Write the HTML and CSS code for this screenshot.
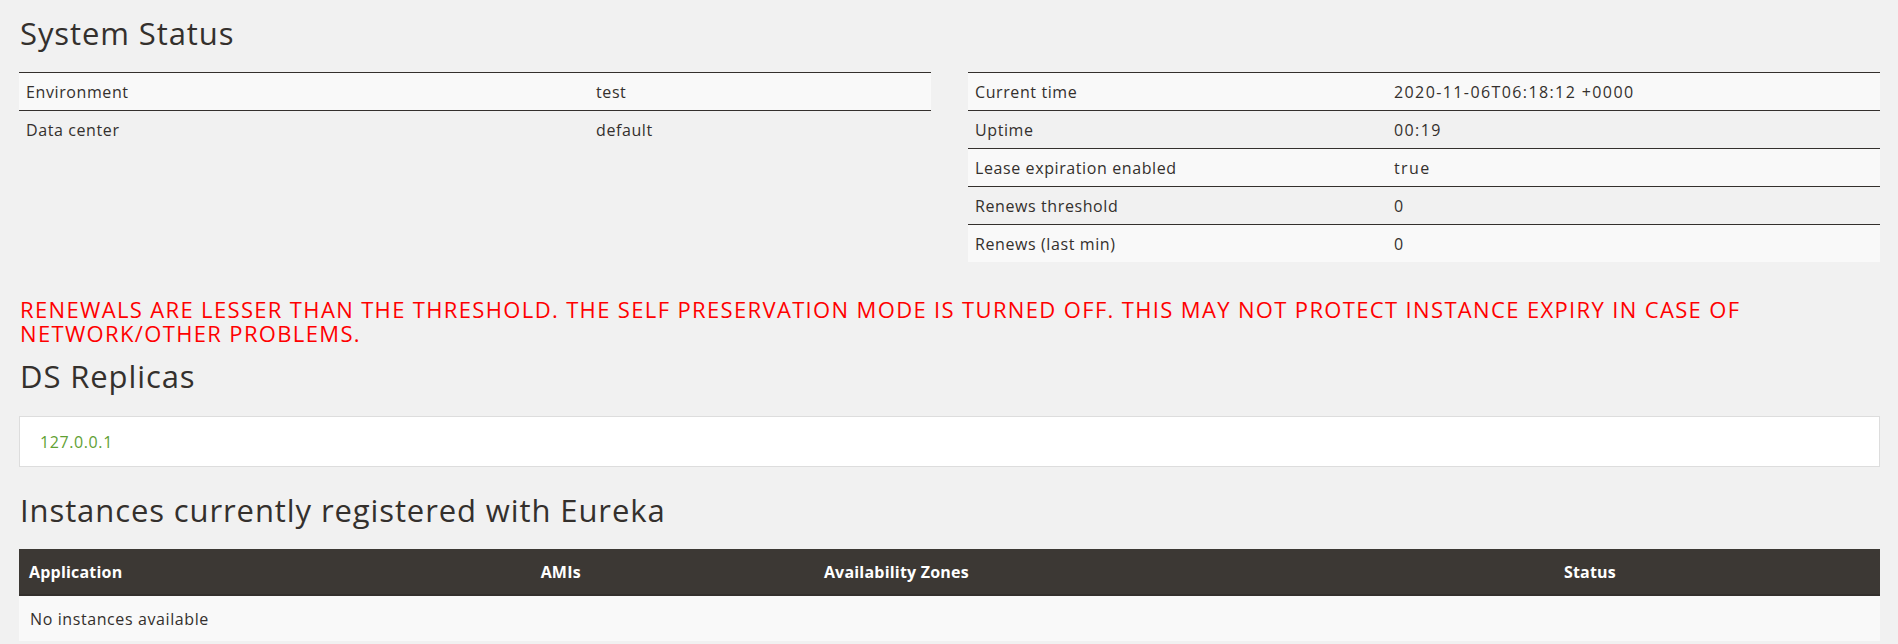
FILE: index.html
```html
<!DOCTYPE html>
<html lang="en">
<head>
  <meta charset="UTF-8" />
  <title>Eureka</title>
  <link rel="stylesheet" href="styles.css">
</head>
<body>
  <div class="page">
    <h1 class="heading">System Status</h1>

    <div class="status-grid">
      <table class="status-table status-env">
        <tbody>
          <tr><td>Environment</td><td>test</td></tr>
          <tr><td>Data center</td><td>default</td></tr>
        </tbody>
      </table>

      <table class="status-table status-info">
        <tbody>
          <tr><td>Current time</td><td>2020-11-06T06:18:12 +0000</td></tr>
          <tr><td>Uptime</td><td>00:19</td></tr>
          <tr><td>Lease expiration enabled</td><td>true</td></tr>
          <tr><td>Renews threshold</td><td>0</td></tr>
          <tr><td>Renews (last min)</td><td>0</td></tr>
        </tbody>
      </table>
    </div>

    <p class="warning">RENEWALS ARE LESSER THAN THE THRESHOLD. THE SELF PRESERVATION MODE IS TURNED OFF. THIS MAY NOT PROTECT INSTANCE EXPIRY IN CASE OF<br>NETWORK/OTHER PROBLEMS.</p>

    <h1 class="heading">DS Replicas</h1>
    <ul class="replicas">
      <li><a href="#">127.0.0.1</a></li>
    </ul>

    <h1 class="heading">Instances currently registered with Eureka</h1>
    <table class="instances">
      <thead>
        <tr>
          <th class="col-app">Application</th>
          <th class="col-ami">AMIs</th>
          <th class="col-zone">Availability Zones</th>
          <th class="col-status">Status</th>
        </tr>
      </thead>
      <tbody>
        <tr><td colspan="4">No instances available</td></tr>
      </tbody>
    </table>
  </div>
</body>
</html>
```

FILE: styles.css
```css
:root {
  --bg-page: #f1f1f1;
  --bg-stripe: #f9f9f9;
  --text-dark: #34302d;
  --head-dark: #3c3834;
  --link-green: #5fa134;
  --alert-red: #ff0000;
}

body {
  margin: 0;
  font-family: 'Open Sans', 'Noto Sans', sans-serif;
  font-size: 16px;
  letter-spacing: 0.6px;
  background-color: var(--bg-page);
  color: var(--text-dark);
}

.page {
  padding: 16px 18px 0 19px;
}

.heading {
  margin: 0;
  font-size: 31px;
  line-height: 34px;
  font-weight: 400;
  letter-spacing: 0.9px;
  padding-left: 1px;
}

.status-grid {
  display: grid;
  grid-template-columns: 1fr 1fr;
  column-gap: 37px;
  align-items: start;
  margin-top: 22px;
}

.status-table {
  width: 100%;
  border-collapse: collapse;
  table-layout: fixed;
}

.status-table td {
  border-top: 1px solid var(--text-dark);
  padding: 0 7px;
  height: 37px;
  line-height: 20px;
  vertical-align: middle;
}

.status-table tr:nth-child(odd) {
  background: var(--bg-stripe);
}

.status-info td:last-child {
  letter-spacing: 1.4px;
}

.status-env td:first-child {
  width: 556px;
}

.status-info td:first-child {
  width: 405px;
}

.warning {
  margin: 35px 0 14px;
  color: var(--alert-red);
  font-size: 22px;
  line-height: 24px;
  letter-spacing: 1.35px;
  padding-left: 1px;
}

.replicas {
  list-style: none;
  margin: 23px 0 26px;
  padding: 0 20px;
  background: #fff;
  border: 1px solid #dddddd;
  height: 49px;
  display: flex;
  align-items: center;
}

.replicas a {
  color: var(--link-green);
  text-decoration: none;
  font-size: 16px;
}

.instances {
  width: 100%;
  margin-top: 22px;
  border-collapse: collapse;
  table-layout: fixed;
}

.instances th {
  background: var(--head-dark);
  color: #fff;
  text-align: left;
  font-weight: 700;
  letter-spacing: 0.2px;
  height: 45px;
  padding: 0 10px;
  border-bottom: 2px solid #34302d;
}

.instances td {
  background: var(--bg-stripe);
  height: 45px;
  padding: 0 11px;
}

.col-app { width: 27.6%; }
.col-ami { width: 14.8%; }
.col-zone { width: 40.4%; }
.col-status { width: 17.2%; }
```
